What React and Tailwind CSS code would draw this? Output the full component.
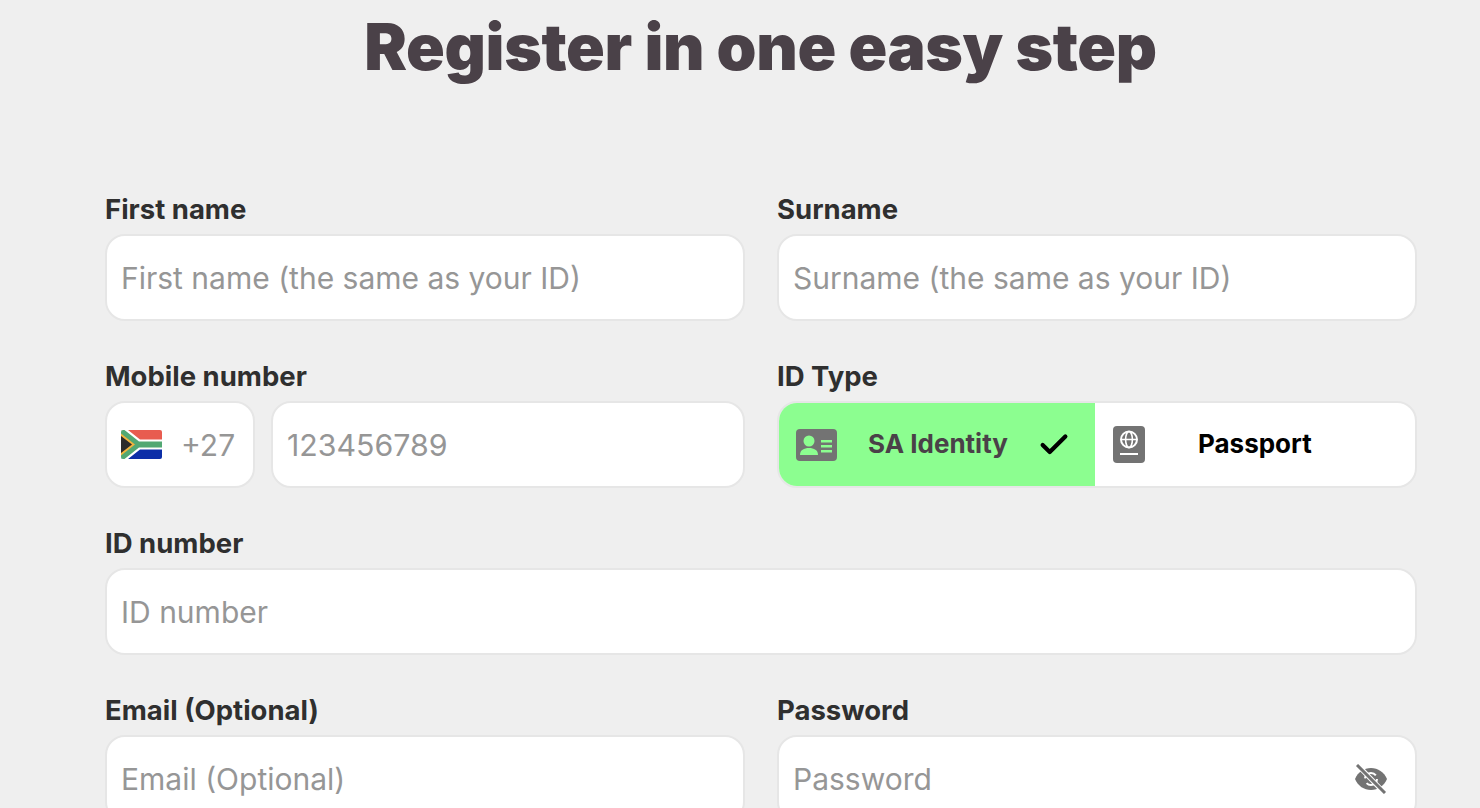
import React from "react";
import { Check } from "lucide-react";

const font = { fontFamily: "Inter, sans-serif" };

function Label({ children }) {
  return <label className="block h-[41px] text-[27.5px] leading-[33px] font-bold text-[#2f2f2f]">{children}</label>;
}

function Box({ className = "", children }) {
  return (
    <div className={`flex h-[87px] items-center rounded-[20px] border-2 border-[#e6e6e6] bg-white ${className}`}>
      {children}
    </div>
  );
}

function Field({ label, placeholder, icon }) {
  return (
    <div className="min-w-0 flex-1">
      <Label>{label}</Label>
      <Box className="px-[14px]">
        <span className="flex-1 pt-[2px] text-[30px] text-[#969696]">{placeholder}</span>
        {icon}
      </Box>
    </div>
  );
}

function Flag() {
  return (
    <svg width="41" height="29" viewBox="0 0 41 29" className="shrink-0">
      <defs>
        <clipPath id="r"><rect width="41" height="29" rx="2" /></clipPath>
      </defs>
      <g clipPath="url(#r)">
        <rect width="41" height="14" fill="#e85c50" />
        <rect y="14" width="41" height="15" fill="#0c2ea8" />
        <path d="M0 0H7L19 9.5H41V19.5H19L7 29H0Z" fill="#fff" />
        <path d="M0 0H3.5L18 11.5H41V17.5H18L3.5 29H0Z" fill="#52a873" />
        <path d="M0 3.5L14 14.5L0 25.5Z" fill="#f2b33d" />
        <path d="M0 6L11 14.5L0 23Z" fill="#2b2b2b" />
      </g>
    </svg>
  );
}

function IdCard() {
  return (
    <svg width="41" height="32" viewBox="0 0 41 32" className="shrink-0">
      <rect width="41" height="32" rx="4" fill="#737373" />
      <circle cx="13" cy="12" r="5.5" fill="#8cfe90" />
      <path d="M4 26c0-5 4-7 9-7s9 2 9 7z" fill="#8cfe90" />
      <path d="M25 11h11v2.4H25zM25 16h11v2.4H25zM25 21h11v2.4H25z" fill="#8cfe90" />
    </svg>
  );
}

function PassportIcon() {
  return (
    <svg width="32" height="37" viewBox="0 0 32 37" className="shrink-0">
      <rect width="32" height="37" rx="4" fill="#737373" />
      <circle cx="16" cy="13.5" r="8" fill="none" stroke="#fff" strokeWidth="2" />
      <ellipse cx="16" cy="13.5" rx="3.4" ry="8" fill="none" stroke="#fff" strokeWidth="1.6" />
      <path d="M8 13.5h16" stroke="#fff" strokeWidth="1.6" />
      <path d="M7 28h18" stroke="#fff" strokeWidth="2.2" />
    </svg>
  );
}

function EyeOff() {
  return (
    <svg width="34" height="30" viewBox="0 0 34 30" className="mr-[13px] shrink-0">
      <path d="M1 15C4 8 10 4 17 4s13 4 16 11c-3 7-9 11-16 11S4 22 1 15z" fill="#737373" />
      <circle cx="17" cy="15" r="6" fill="none" stroke="#fff" strokeWidth="2" strokeDasharray="14 5" />
      <path d="M3 0.5L31 29.5" stroke="#fff" strokeWidth="5" />
      <path d="M3 1L31 29" stroke="#737373" strokeWidth="3" />
    </svg>
  );
}

export default function App() {
  return (
    <div style={font} className="h-[808px] w-[1480px] overflow-hidden bg-[#efefef]">
      <h1 className="pt-[8px] pl-[41px] text-center text-[64px] leading-[78px] font-black tracking-[-0.34px] text-[#4a4148]">
        Register in one easy step
      </h1>
      <div className="mt-[107px] ml-[105px] flex w-[1312px] flex-col gap-[39px]">
        <div className="flex gap-[32px]">
          <Field label="First name" placeholder="First name (the same as your ID)" />
          <Field label="Surname" placeholder="Surname (the same as your ID)" />
        </div>
        <div className="flex gap-[32px]">
          <div className="min-w-0 flex-1">
            <Label>Mobile number</Label>
            <div className="flex gap-[16px]">
              <Box className="w-[150px] gap-[19px] pl-[14px]">
                <Flag />
                <span className="pt-[2px] text-[30px] text-[#969696]">+27</span>
              </Box>
              <Box className="flex-1 px-[14px]">
                <span className="pt-[2px] text-[30.3px] text-[#969696]">123456789</span>
              </Box>
            </div>
          </div>
          <div className="min-w-0 flex-1">
            <Label>ID Type</Label>
            <Box className="overflow-hidden">
              <div className="flex h-full w-[316px] items-center bg-[#8cfe90] pr-[24px] pl-[17px]">
                <IdCard />
                <span className="ml-[31px] flex-1 pb-[2px] text-[26px] font-bold text-[#4a4148]">SA Identity</span>
                <Check size={34} strokeWidth={3} className="text-black" />
              </div>
              <div className="flex h-full flex-1 items-center pl-[18px]">
                <PassportIcon />
                <span className="ml-[53px] pb-[2px] text-[26px] font-bold text-black">Passport</span>
              </div>
            </Box>
          </div>
        </div>
        <div className="flex">
          <Field label="ID number" placeholder="ID number" />
        </div>
        <div className="flex gap-[32px]">
          <Field label="Email (Optional)" placeholder="Email (Optional)" />
          <Field label="Password" placeholder="Password" icon={<EyeOff />} />
        </div>
      </div>
    </div>
  );
}
